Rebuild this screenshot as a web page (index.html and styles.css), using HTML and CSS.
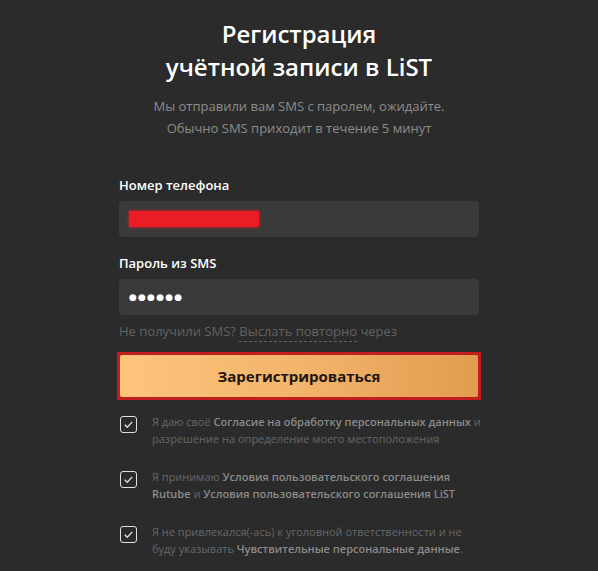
FILE: index.html
```html
<!DOCTYPE html>
<html lang="ru">
<head>
  <meta charset="UTF-8" />
  <title>Регистрация в LiST</title>
  <link rel="stylesheet" href="styles.css">
</head>
<body>

  <div class="signup">
    <h1>Регистрация<br>учётной записи в LiST</h1>
    <p class="lead">
      Мы отправили вам SMS с паролем, ожидайте.<br>
      Обычно SMS приходит в течение 5 минут
    </p>

    <form class="form">
      <label class="label">Номер телефона</label>
      <div class="field"><span class="redacted"></span></div>

      <label class="label">Пароль из SMS</label>
      <div class="field"><span class="dots">●●●●●●</span></div>

      <div class="resend">Не получили SMS? <span class="dashed">Выслать повторно</span> через</div>

      <div class="submit-wrap">
        <button type="button" class="submit">Зарегистрироваться</button>
      </div>

      <!-- Agreements -->
      <div class="agree">
        <span class="check"><svg viewBox="0 0 16 16"><path d="M4 8.3l2.7 2.7L12 5.2"/></svg></span>
        <p>Я даю своё <a>Согласие на обработку персональных данных</a> и разрешение на определение моего местоположения</p>
      </div>
      <div class="agree">
        <span class="check"><svg viewBox="0 0 16 16"><path d="M4 8.3l2.7 2.7L12 5.2"/></svg></span>
        <p>Я принимаю <a>Условия пользовательского соглашения Rutube</a> и <a>Условия пользовательского соглашения LiST</a></p>
      </div>
      <div class="agree">
        <span class="check"><svg viewBox="0 0 16 16"><path d="M4 8.3l2.7 2.7L12 5.2"/></svg></span>
        <p>Я не привлекался(-ась) к уголовной ответственности и не буду указывать <a>Чувствительные персональные данные</a>.</p>
      </div>
    </form>
  </div>

</body>
</html>
```

FILE: styles.css
```css
body {
  margin: 0;
  background: #2b2b2b;
  color: #fff;
  font-family: "Open Sans", Arial, sans-serif;
}

.signup {
  width: 360px;
  margin: 0 auto;
  padding-top: 17px;
  text-align: center;
}

h1 {
  font-size: 24px;
  font-weight: 600;
  line-height: 33px;
  margin: 0;
}

.lead {
  font-size: 13px;
  line-height: 22px;
  color: #8c8c8c;
  margin: 12px 0 0;
}

.form {
  margin-top: 37px;
  text-align: left;
}

.label {
  display: block;
  font-size: 13px;
  font-weight: 600;
  line-height: 18px;
  margin-bottom: 7px;
}

.field {
  height: 36px;
  background: #3a3a3a;
  border-radius: 4px;
  display: flex;
  align-items: center;
  padding: 0 10px;
  margin-bottom: 17px;
}

.redacted {
  width: 130px;
  height: 16px;
  background: #ec1c24;
  box-shadow: 0 0 3px #ec1c24;
}

.dots {
  font-family: "DejaVu Sans", sans-serif;
  font-size: 9px;
  letter-spacing: 1.2px;
  color: #fff;
}

.resend {
  font-size: 13px;
  color: #626262;
  margin-top: -10px;
  line-height: 18px;
}

.dashed {
  border-bottom: 1px dashed #626262;
  padding-bottom: 1px;
}

.submit-wrap {
  margin: 12px -2px 0;
  border: 3px solid #c21d1f;
  background: #c21d1f;
}

.submit {
  display: block;
  width: 100%;
  height: 42px;
  border: none;
  border-radius: 2px;
  background: linear-gradient(90deg, #fdc47c 0%, #f3b46b 50%, #e29c50 100%);
  color: #1d1613;
  font-family: inherit;
  font-size: 15px;
  font-weight: 700;
  cursor: pointer;
}

.agree {
  display: flex;
  gap: 15px;
  margin-top: 13px;
  margin-right: -5px;
}

.agree + .agree {
  margin-top: 21px;
}

.check {
  flex: none;
  width: 15px;
  height: 15px;
  margin: 3px 0 0 1px;
  border: 1.5px solid #e0e0e0;
  border-radius: 3px;
}

.check svg {
  display: block;
  width: 15px;
  height: 15px;
  fill: none;
  stroke: #e0e0e0;
  stroke-width: 1.4;
}

.agree p {
  margin: 0;
  font-size: 11px;
  line-height: 17px;
  color: #676767;
}

.agree a {
  font-weight: 600;
  color: #8a8a8a;
}
```
